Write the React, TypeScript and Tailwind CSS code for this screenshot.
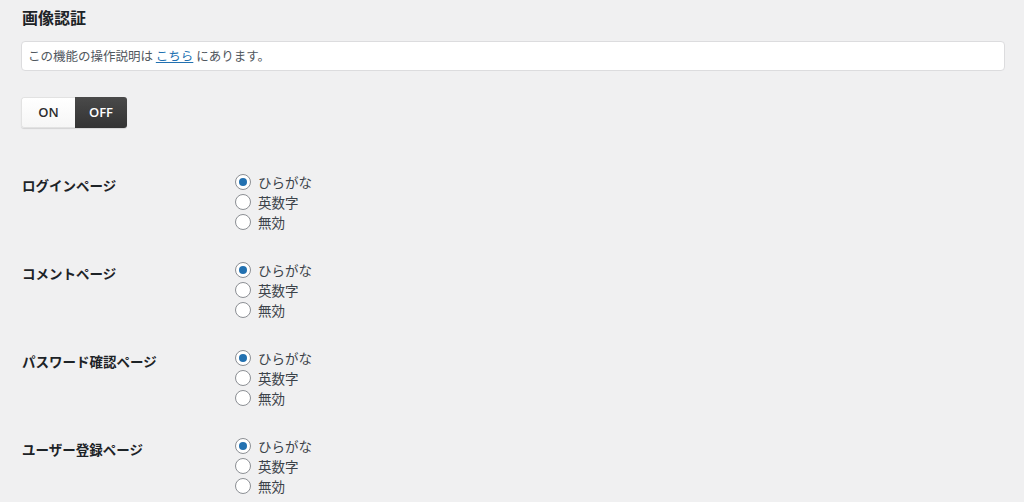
import React from "react";

const font = { fontFamily: '"Noto Sans CJK JP", "Noto Sans", sans-serif' };

function Radio({ checked, label }: { checked?: boolean; label: string }) {
  return (
    <label className="flex items-center h-[20px] text-[13.5px] text-[#3c434a]">
      <span className="w-[16px] h-[16px] rounded-full border border-[#8c8f94] bg-white flex items-center justify-center mr-[7px] ml-[1px] shrink-0">
        {checked && <span className="w-[8px] h-[8px] rounded-full bg-[#2271b1]" />}
      </span>
      {label}
    </label>
  );
}

function Row({ title }: { title: string }) {
  return (
    <div className="flex py-[14px]">
      <div className="w-[212px] pt-[3px] text-[13.5px] leading-[20px] font-bold text-[#1d2327]">{title}</div>
      <div className="flex flex-col">
        <Radio checked label="ひらがな" />
        <Radio label="英数字" />
        <Radio label="無効" />
      </div>
    </div>
  );
}

export default function App() {
  return (
    <div className="w-[1024px] h-[502px] overflow-hidden bg-[#f0f0f1] pl-[21px] pr-[19px]" style={font}>
      <h2 className="pt-[7px] pl-[1px] text-[16px] leading-[20px] font-bold text-[#1d2327]">画像認証</h2>
      <div className="mt-[14px] h-[30px] bg-white border border-[#dcdcde] rounded-[4px] px-[6px] flex items-center text-[12.5px] text-[#50575e]">
        この機能の操作説明は&nbsp;<a className="text-[#2271b1] underline">こちら</a>&nbsp;にあります。
      </div>
      <div className="mt-[26px] flex w-[106px] h-[31px] rounded-[3px] overflow-hidden shadow-[0_1px_1px_rgba(0,0,0,0.12)]">
        <div className="w-[54px] flex items-center justify-center bg-gradient-to-b from-white to-[#f6f6f6] border border-r-0 border-[#e2e2e2] rounded-l-[3px] text-[13px] font-semibold text-[#2c2c2c]" style={{ fontFamily: '"Open Sans", sans-serif' }}>ON</div>
        <div className="flex-1 flex items-center justify-center bg-gradient-to-b from-[#4a4a4a] to-[#333] text-[13px] font-semibold text-white" style={{ fontFamily: '"Open Sans", sans-serif' }}>OFF</div>
      </div>
      <div className="mt-[30px] pl-[1px]">
        <Row title="ログインページ" />
        <Row title="コメントページ" />
        <Row title="パスワード確認ページ" />
        <Row title="ユーザー登録ページ" />
      </div>
    </div>
  );
}
